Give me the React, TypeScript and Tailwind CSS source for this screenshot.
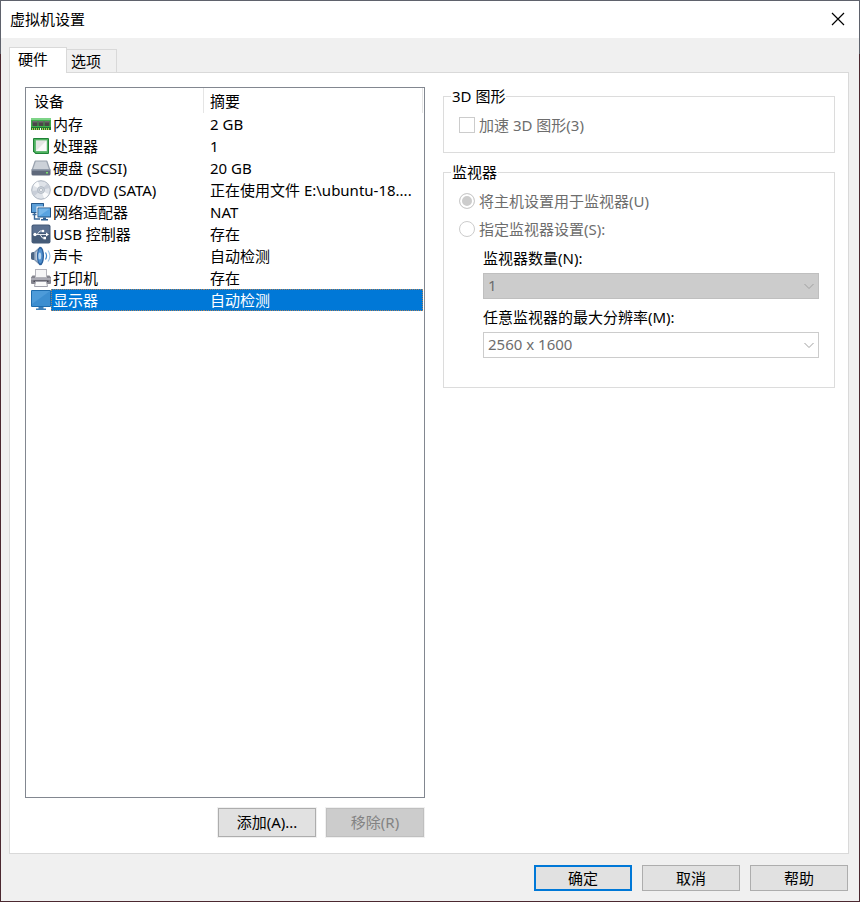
import type { ReactNode } from 'react';

const MemoryIcon = () => (
  <svg className="block w-5 h-5" viewBox="0 0 20 20">
    <rect x="0" y="4" width="20" height="12" fill="#3fae4d" />
    <rect x="0" y="4" width="20" height="2" fill="#7ed488" />
    <path d="M1.500 7h5v5h-5zM7.500 7h5v5h-5zM13.500 7h5v5h-5z" fill="#4a4648" />
    <path d="M1.500 7h5v1.500h-5zM7.500 7h5v1.500h-5zM13.500 7h5v1.500h-5z" fill="#6f6b6e" />
    <path d="M0 13h20v3H0z" fill="#1e7a2e" />
    <path d="M1 14h1v2H1zM3 14h1v2H3zM5 14h1v2H5zM7 14h1v2H7zM11 14h1v2h-1zM13 14h1v2h-1zM15 14h1v2h-1zM17 14h1v2h-1z" fill="#b9c65a" />
    <path d="M9 14h1v2H9z" fill="#fff" />
  </svg>
);

const CpuIcon = () => (
  <svg className="block w-5 h-5" viewBox="0 0 20 20">
    <path d="M3 2h14a1 1 0 0 1 1 1v14a1 1 0 0 1-1 1H4.500L2 15.500V3a1 1 0 0 1 1-1z" fill="#1f8236" />
    <path d="M3 3h14v14H5l-2-2z" fill="#4fb360" />
    <rect x="4.500" y="4" width="11.500" height="11.500" fill="#7dbf88" />
    <rect x="5" y="4.500" width="10.500" height="10.500" fill="#e4e6e4" />
    <path d="M5 15L15.500 4.500V15z" fill="#fafafa" />
  </svg>
);

const DiskIcon = () => (
  <svg className="block w-5 h-5" viewBox="0 0 20 20">
    <path d="M4.500 2.500h11a1 1 0 0 1 1 .8L19.500 12H.5l3-8.700a1 1 0 0 1 1-.8z" fill="#9ba3af" />
    <path d="M4.800 3.500h10.400l2.800 8H2z" fill="#ccd1d8" />
    <path d="M.5 11.500h19V16a1.500 1.500 0 0 1-1.500 1.500H2A1.500 1.500 0 0 1 .5 16z" fill="#5f697b" />
    <path d="M1 11.500h18v1H1z" fill="#9aa4b4" />
    <rect x="15" y="14" width="2" height="1.500" fill="#7ee26b" />
  </svg>
);

const DiscIcon = () => (
  <svg className="block w-5 h-5" viewBox="0 0 20 20">
    <circle cx="10" cy="10" r="9.300" fill="#dfe3e9" stroke="#a3abb8" strokeWidth=".9" />
    <path d="M10 10L2.500 5.500A9 9 0 0 1 7 1.600zM10 10l7.600 4.300a9 9 0 0 1-4.500 4z" fill="#fafbfc" />
    <path d="M10 10L1.200 11a9 9 0 0 0 2.300 5zM10 10l8.800-2a9 9 0 0 0-2.600-4.300z" fill="#c8ced8" />
    <circle cx="10" cy="10" r="3.500" fill="#ccd2da" stroke="#a8b0bc" strokeWidth=".7" />
    <circle cx="10" cy="10" r="1.500" fill="#fff" stroke="#949dab" strokeWidth=".6" />
  </svg>
);

const NetworkIcon = () => (
  <svg className="block w-5 h-5" viewBox="0 0 20 20">
    <rect x="0" y="1" width="13" height="10" rx=".5" fill="#265a8e" />
    <rect x="1" y="2" width="11" height="8" fill="#5c9fd8" />
    <path d="M3.500 11v6H9M1.500 12.500H6" stroke="#38699b" strokeWidth="1.400" fill="none" />
    <rect x="5.500" y="4.500" width="14.500" height="11.500" fill="#fff" />
    <rect x="6.500" y="5.500" width="13.500" height="10" rx=".5" fill="#1d5083" />
    <rect x="7.500" y="6.500" width="11.500" height="8" fill="#58a3e0" />
    <path d="M7.500 6.500H19l-11.500 8z" fill="#78b8ea" />
    <path d="M12 15.500h3V17h2v1.500h-7V17h2z" fill="#2d6093" />
  </svg>
);

const UsbIcon = () => (
  <svg className="block w-5 h-5" viewBox="0 0 20 20">
    <rect x=".5" y=".5" width="19" height="19" rx="2" fill="#455b78" />
    <path d="M1.500 3a1.500 1.500 0 0 1 1.500-1.500h14A1.500 1.500 0 0 1 18.500 3v6h-17z" fill="#5a7090" />
    <path d="M4 10.500h12M6 10.500l3-3.500h2.500M9 10.500l2.500 3.500H14" stroke="#e8edf3" fill="none" />
    <circle cx="4" cy="10.500" r="1.700" fill="#fff" />
    <circle cx="12" cy="7" r="1.300" fill="#fff" />
    <rect x="12.500" y="12.800" width="2.500" height="2.500" fill="#fff" />
    <path d="M15 8.500l3 2-3 2z" fill="#fff" />
  </svg>
);

const SoundIcon = () => (
  <svg className="block w-5 h-5" viewBox="0 0 20 20">
    <path d="M0 8c0-1.200.8-2 2-2h2v8H2c-1.200 0-2-.8-2-2z" fill="#4d6684" />
    <path d="M3 6l6-5.500v19L3 14z" fill="#8298b3" />
    <path d="M4.500 6.500L8 3.500v13l-3.500-3z" fill="#c0cddc" />
    <ellipse cx="9.500" cy="10" rx="3.500" ry="9.300" fill="#2a5f9c" />
    <ellipse cx="9.300" cy="10" rx="2.400" ry="7.500" fill="#4f8fce" />
    <ellipse cx="8.800" cy="10" rx="1.400" ry="3.500" fill="#b5d4f0" />
    <path d="M14.500 6.500c1.300 2.200 1.300 4.800 0 7" stroke="#3e87cc" strokeWidth="1.200" fill="none" />
    <path d="M17 4.500c2.300 3.300 2.300 7.700 0 11" stroke="#9cc4e8" strokeWidth="1.200" fill="none" />
  </svg>
);

const PrinterIcon = () => (
  <svg className="block w-5 h-5" viewBox="0 0 20 20">
    <rect x="4.500" y="1.500" width="11" height="8" fill="#f5f5f7" stroke="#b4b4bc" />
    <path d="M1.500 7.500H4V10h12V7.500h2.500L20 9.500V15a1 1 0 0 1-1 1H1a1 1 0 0 1-1-1V9.500z" fill="#85858f" />
    <path d="M0 10h20v2H0z" fill="#a9a9b3" />
    <path d="M2.500 12.500h15V14h-15z" fill="#4a4a55" />
    <path d="M4.500 13.500h11l1 5h-13z" fill="#fafafa" stroke="#a0a0aa" />
  </svg>
);

const DisplayIcon = () => (
  <svg className="block w-5 h-5" viewBox="0 0 20 20">
    <rect x="0" y="0" width="20" height="17" rx="1" fill="#1d6cae" />
    <rect x="1" y="1" width="18" height="15" fill="#3c8ed0" />
    <path d="M1 1h18L1 14z" fill="#4d9bd9" />
    <path d="M7.500 17h5v1.500H15V20H5v-1.500h2.500z" fill="#3d7fb8" />
  </svg>
);

const devices = [
  { icon: <MemoryIcon />, name: '内存', summary: '2 GB' },
  { icon: <CpuIcon />, name: '处理器', summary: '1' },
  { icon: <DiskIcon />, name: '硬盘 (SCSI)', summary: '20 GB' },
  { icon: <DiscIcon />, name: 'CD/DVD (SATA)', summary: '正在使用文件 E:\\ubuntu-18....' },
  { icon: <NetworkIcon />, name: '网络适配器', summary: 'NAT' },
  { icon: <UsbIcon />, name: 'USB 控制器', summary: '存在' },
  { icon: <SoundIcon />, name: '声卡', summary: '自动检测' },
  { icon: <PrinterIcon />, name: '打印机', summary: '存在' },
  { icon: <DisplayIcon />, name: '显示器', summary: '自动检测', selected: true },
];

function Group({ title, children, className }: { title: string; children: ReactNode; className: string }) {
  return (
    <fieldset className={`min-w-0 border border-[#dcdcdc] px-[15px] pt-[9px] ${className}`}>
      <legend className="-ml-2 px-px leading-[19px]">{title}</legend>
      {children}
    </fieldset>
  );
}

function Dropdown({ id, value, className }: { id: string; value: string; className: string }) {
  return (
    <div className="relative">
      <select
        id={id}
        disabled
        className={`block w-full h-[26px] appearance-none border pl-1 pr-6 pb-0.5 text-[#6d6d6d] opacity-100 ${className}`}
      >
        <option>{value}</option>
      </select>
      <svg className="absolute right-[5px] top-2.5 w-[10px] h-[7px] pointer-events-none" viewBox="0 0 10 7">
        <path d="M.5 1L5 5.500 9.500 1" fill="none" stroke="#a0a0a0" />
      </svg>
    </div>
  );
}

export default function App() {
  return (
    <div className="min-h-screen flex p-px bg-[linear-gradient(#5f626c_54px,#4b2830_54px)] font-['Noto_Sans','Noto_Sans_CJK_SC',sans-serif] text-[15px] leading-5 text-black">
      <div className="flex-1 min-w-0 flex flex-col bg-[#f0f0f0]">
        {/* Title bar */}
        <header className="h-[37px] flex items-center justify-between bg-white pl-[9px] pr-3.5 pb-0.5">
          <h1>虚拟机设置</h1>
          <button aria-label="关闭">
            <svg className="block w-[14px] h-[14px]" viewBox="0 0 14 14">
              <path d="M1 1l12 12M13 1L1 13" stroke="#000" strokeWidth="1.200" />
            </svg>
          </button>
        </header>

        {/* Tabs */}
        <div role="tablist" className="flex items-end pt-[9px] pl-2">
          <button role="tab" aria-selected="true" className="relative -mb-px w-[58px] h-[26px] bg-white border border-b-0 border-[#d9d9d9] pl-2 pb-[3px] text-left">
            硬件
          </button>
          <button role="tab" aria-selected="false" className="w-[50px] h-[23px] border border-l-0 border-b-0 border-[#d9d9d9] pl-1 text-left">
            选项
          </button>
        </div>

        <main className="flex-1 flex gap-[18px] ml-2 mr-2.5 bg-white border border-[#d9d9d9] pt-3.5 pb-4 pl-[15px] pr-[13px]">
          {/* Device list */}
          <section className="w-[400px] shrink-0 flex flex-col gap-2.5">
            <div className="flex-1 border border-[#828790] pr-px">
              <table className="w-full table-fixed border-separate border-spacing-0">
                <colgroup>
                  <col className="w-[25px]" />
                  <col className="w-[153px]" />
                  <col />
                </colgroup>
                <thead>
                  <tr className="h-[25px] text-left">
                    <th colSpan={2} className="border-r border-[#e5e5e5] p-0 pl-2 font-normal">设备</th>
                    <th className="border-r border-[#e5e5e5] p-0 pl-1.5 font-normal">摘要</th>
                  </tr>
                </thead>
                <tbody>
                  {devices.map((d) => (
                    <tr key={d.name} className="h-[22px]" aria-selected={!!d.selected}>
                      <td className="p-0 pl-[5px]">{d.icon}</td>
                      <td
                        className={
                          d.selected
                            ? 'p-0 pl-px bg-[#0078d7] text-white border border-r-0 border-dotted border-[#a58262]'
                            : 'p-0 pl-0.5'
                        }
                      >
                        {d.name}
                      </td>
                      <td
                        className={
                          d.selected
                            ? 'p-0 pl-1.5 bg-[#0078d7] text-white border border-l-0 border-dotted border-[#a58262]'
                            : 'p-0 pl-1.5 truncate'
                        }
                      >
                        {d.summary}
                      </td>
                    </tr>
                  ))}
                </tbody>
              </table>
            </div>
            <div className="flex justify-end gap-2.5 pr-px">
              <button className="w-[98px] h-[29px] bg-[#e1e1e1] border border-[#adadad] ring-1 ring-[#f0f0f0] pb-0.5">添加(A)...</button>
              <button disabled className="w-[98px] h-[29px] bg-[#cccccc] border border-[#bfbfbf] ring-1 ring-[#f0f0f0] pb-0.5 text-[#838383]">
                移除(R)
              </button>
            </div>
          </section>

          {/* Display settings */}
          <section className="flex-1 min-w-0 flex flex-col gap-2.5">
            <Group title="3D 图形" className="pb-[17px]">
              <label className="flex items-center gap-1 text-[#6d6d6d]">
                <input type="checkbox" disabled className="w-4 h-4 appearance-none border border-[#cccccc] bg-white" />
                加速 3D 图形(3)
              </label>
            </Group>

            <Group title="监视器" className="pb-[29px]">
              <div className="flex flex-col gap-2 text-[#6d6d6d]">
                <label className="flex items-center gap-1">
                  <input
                    type="radio"
                    name="monitor"
                    disabled
                    defaultChecked
                    className="w-4 h-4 appearance-none rounded-full border border-[#cccccc] bg-white checked:bg-[#cccccc] checked:shadow-[inset_0_0_0_2px_white]"
                  />
                  将主机设置用于监视器(U)
                </label>
                <label className="flex items-center gap-1">
                  <input type="radio" name="monitor" disabled className="w-4 h-4 appearance-none rounded-full border border-[#cccccc] bg-white" />
                  指定监视器设置(S):
                </label>
              </div>
              <div className="ml-6 mt-[9px] flex flex-col gap-[5px]">
                <label htmlFor="count">监视器数量(N):</label>
                <Dropdown id="count" value="1" className="bg-[#cccccc] border-[#bfbfbf]" />
                <label htmlFor="resolution" className="mt-[3px]">任意监视器的最大分辨率(M):</label>
                <Dropdown id="resolution" value="2560 x 1600" className="bg-white border-[#cccccc]" />
              </div>
            </Group>
          </section>
        </main>

        {/* Footer */}
        <footer className="flex justify-end gap-2.5 pt-[11px] pb-2.5 pr-[11px]">
          <button className="w-[98px] h-[26px] bg-[#e1e1e1] border-2 border-[#0078d7]">确定</button>
          <button className="w-[98px] h-[26px] bg-[#e1e1e1] border border-[#adadad]">取消</button>
          <button className="w-[98px] h-[26px] bg-[#e1e1e1] border border-[#adadad]">帮助</button>
        </footer>
      </div>
    </div>
  );
}
